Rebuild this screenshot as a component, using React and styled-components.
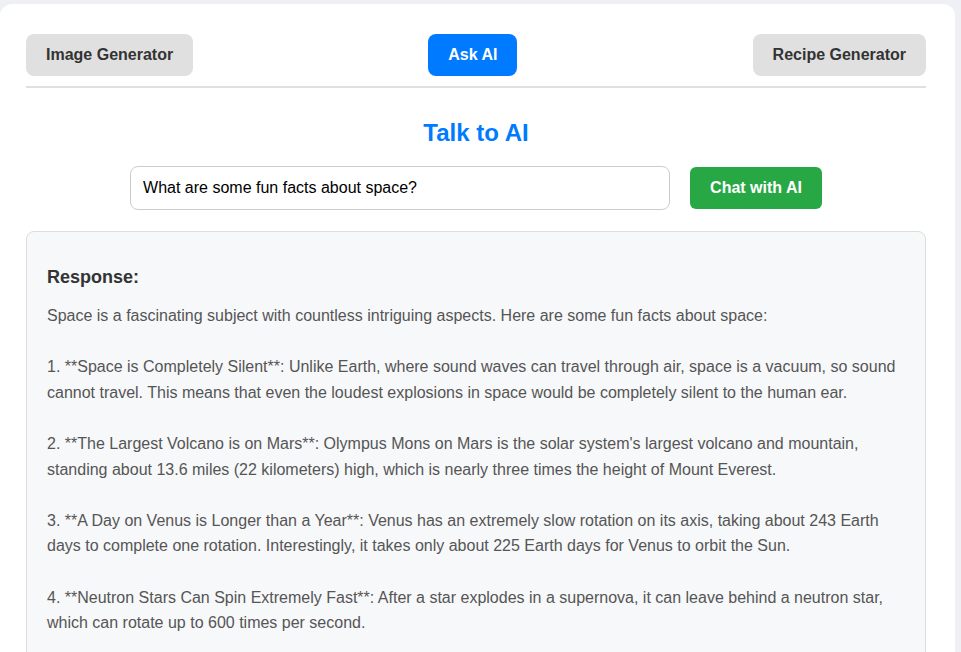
import React from "react";
import styled, { createGlobalStyle } from "styled-components";

const Global = createGlobalStyle`
  html, body { margin: 0; padding: 0; background: #eef0f3; }
  body { font-family: "Liberation Sans", Arial, sans-serif; }
  * { box-sizing: border-box; }
`;

const Card = styled.div`
  width: 955px;
  margin-top: 4px;
  background: #fff;
  border-radius: 12px;
  padding: 30px 29px 30px 26px;
  min-height: 700px;
`;

const Nav = styled.nav`
  display: flex;
  justify-content: space-between;
  align-items: center;
  padding-bottom: 10px;
  border-bottom: 2px solid #e0e0e0;
`;

const NavButton = styled.button`
  font-family: inherit;
  font-size: 16px;
  font-weight: bold;
  line-height: 18px;
  padding: 12px 20px;
  border: none;
  border-radius: 8px;
  background: ${(p) => (p.$active ? "#007bff" : "#e0e0e0")};
  color: ${(p) => (p.$active ? "#fff" : "#333")};
  cursor: pointer;
`;

const Title = styled.h2`
  margin: 31px 0 20px;
  text-align: center;
  color: #007bff;
  font-size: 24px;
  line-height: 27px;
  font-weight: bold;
`;

const Form = styled.div`
  display: flex;
  justify-content: center;
  align-items: center;
  gap: 20px;
`;

const Input = styled.input`
  width: 540px;
  height: 44px;
  padding: 0 12px;
  font-family: inherit;
  font-size: 16px;
  color: #000;
  border: 1px solid #ccc;
  border-radius: 8px;
  outline: none;
`;

const SubmitButton = styled.button`
  font-family: inherit;
  font-size: 16px;
  font-weight: bold;
  line-height: 18px;
  padding: 12px 20px;
  border: none;
  border-radius: 6px;
  background: #28a745;
  color: #fff;
  cursor: pointer;
`;

const ResponseBox = styled.div`
  margin-top: 21px;
  background: #f7f8fa;
  border: 1px solid #ddd;
  border-radius: 8px;
  padding: 20px;
`;

const ResponseTitle = styled.h3`
  margin: 15px 0 15px;
  font-size: 18px;
  line-height: 21px;
  color: #333;
  font-weight: bold;
`;

const ResponseText = styled.p`
  margin: 0;
  font-size: 16px;
  line-height: 25.6px;
  color: #555;
  white-space: pre-wrap;
`;

const responseText = `Space is a fascinating subject with countless intriguing aspects. Here are some fun facts about space:

1. **Space is Completely Silent**: Unlike Earth, where sound waves can travel through air, space is a vacuum, so sound cannot travel. This means that even the loudest explosions in space would be completely silent to the human ear.

2. **The Largest Volcano is on Mars**: Olympus Mons on Mars is the solar system's largest volcano and mountain, standing about 13.6 miles (22 kilometers) high, which is nearly three times the height of Mount Everest.

3. **A Day on Venus is Longer than a Year**: Venus has an extremely slow rotation on its axis, taking about 243 Earth days to complete one rotation. Interestingly, it takes only about 225 Earth days for Venus to orbit the Sun.

4. **Neutron Stars Can Spin Extremely Fast**: After a star explodes in a supernova, it can leave behind a neutron star, which can rotate up to 600 times per second.

5. **There Are More Stars Than Grains of Sand**: Estimates suggest there are more stars in the universe than grains of sand on all of Earth's beaches.`;

export default function App() {
  return (
    <>
      <Global />
      <Card>
        <Nav>
          <NavButton>Image Generator</NavButton>
          <NavButton $active>Ask AI</NavButton>
          <NavButton>Recipe Generator</NavButton>
        </Nav>
        <Title>Talk to AI</Title>
        <Form>
          <Input defaultValue="What are some fun facts about space?" />
          <SubmitButton>Chat with AI</SubmitButton>
        </Form>
        <ResponseBox>
          <ResponseTitle>Response:</ResponseTitle>
          <ResponseText>{responseText}</ResponseText>
        </ResponseBox>
      </Card>
    </>
  );
}
